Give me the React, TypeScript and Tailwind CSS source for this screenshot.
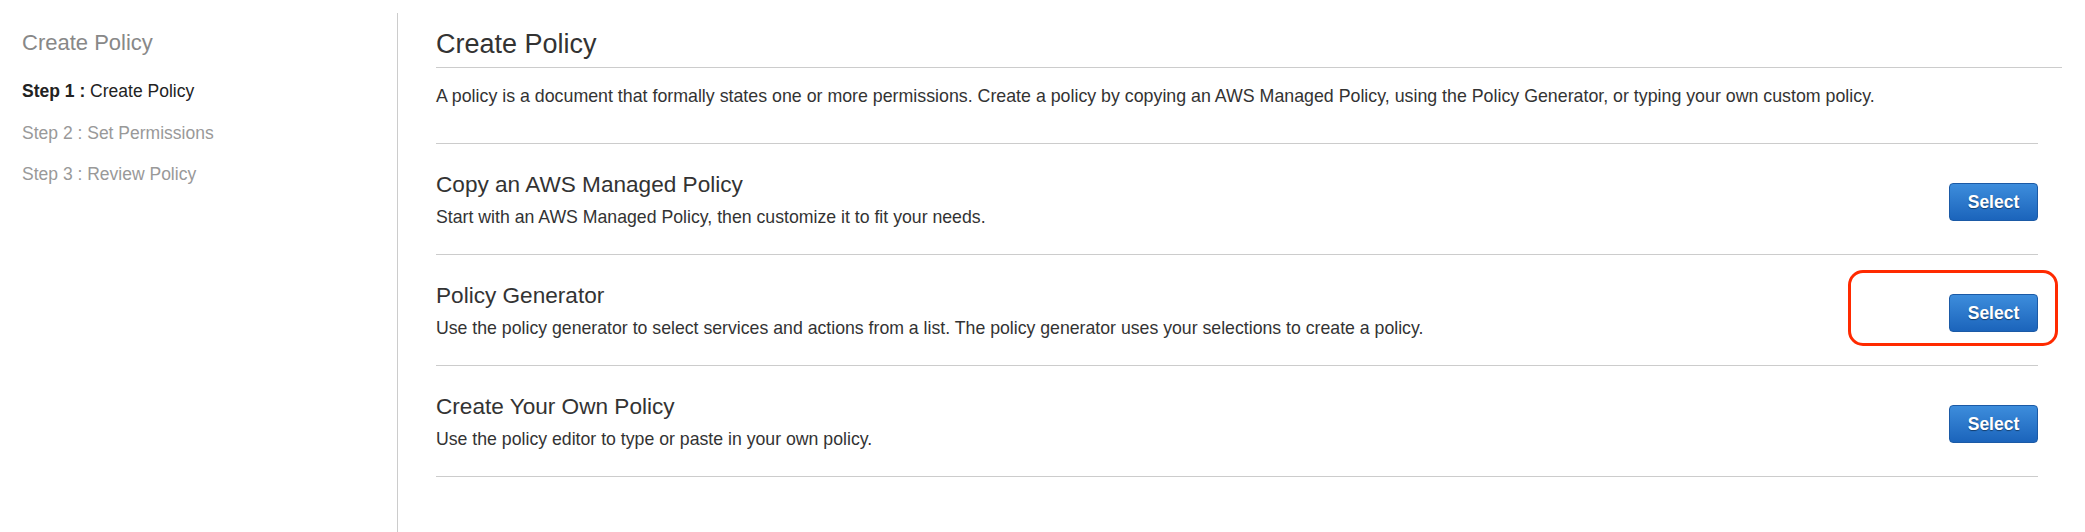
const options = [
  {
    title: 'Copy an AWS Managed Policy',
    desc: 'Start with an AWS Managed Policy, then customize it to fit your needs.',
    highlight: false,
  },
  {
    title: 'Policy Generator',
    desc: 'Use the policy generator to select services and actions from a list. The policy generator uses your selections to create a policy.',
    highlight: true,
  },
  {
    title: 'Create Your Own Policy',
    desc: 'Use the policy editor to type or paste in your own policy.',
    highlight: false,
  },
];

const steps = ['Create Policy', 'Set Permissions', 'Review Policy'];

export default function App() {
  return (
    <div className="flex h-[532px] bg-white font-['Liberation_Sans',Arial,sans-serif] text-[#333]">
      {/* Wizard sidebar */}
      <aside className="w-[398px] shrink-0 pt-[13px]">
        <div className="h-full border-r border-[#cccccc] pl-[22px] pt-[16px]">
          <h2 className="text-[22px] leading-[28px] text-[#888]">Create Policy</h2>
          <ul className="mt-[22px] flex flex-col gap-[17.5px]">
            {steps.map((step, i) => (
              <li
                key={step}
                className={`text-[17.5px] leading-[24px] ${i === 0 ? 'text-[#222]' : 'text-[#999]'}`}
              >
                <span className={i === 0 ? 'font-bold' : ''}>Step {i + 1} :</span> {step}
              </li>
            ))}
          </ul>
        </div>
      </aside>

      {/* Main content */}
      <main className="flex-1 pl-[38px] pr-[23px] pt-[28px]">
        <h1 className="border-b border-[#cccccc] pb-[7px] text-[27px] leading-[32px] text-[#333]">
          Create Policy
        </h1>
        <p className="mt-[16px] text-[17.8px] leading-[24px] text-[#333]">
          A policy is a document that formally states one or more permissions. Create a policy by copying an AWS
          Managed Policy, using the Policy Generator, or typing your own custom policy.
        </p>

        <div className="mr-[24px] mt-[35px] border-b border-[#cccccc]">
          {options.map((opt) => (
            <div
              key={opt.title}
              className="flex items-center justify-between border-t border-[#cccccc] pb-[25px] pt-[27px]"
            >
              <div>
                <h3 className="text-[22.6px] leading-[28px] text-[#333]">{opt.title}</h3>
                <p className="mt-[6px] text-[17.7px] leading-[24px] text-[#333]">{opt.desc}</p>
              </div>
              <div className="relative mt-[4px]">
                {opt.highlight && (
                  <span className="pointer-events-none absolute -bottom-[14px] -left-[101px] -right-[20px] -top-[24px] rounded-[15px] border-[3px] border-[#ff2a00]" />
                )}
                <button className="flex h-[38px] w-[89px] items-center justify-center rounded-[4px] border border-[#1b5aa6] bg-gradient-to-b from-[#3d8ddc] to-[#1b64bb] text-[17.5px] font-bold text-white [text-shadow:0_1px_1px_rgba(0,0,0,0.45)]">
                  Select
                </button>
              </div>
            </div>
          ))}
        </div>
      </main>
    </div>
  );
}
